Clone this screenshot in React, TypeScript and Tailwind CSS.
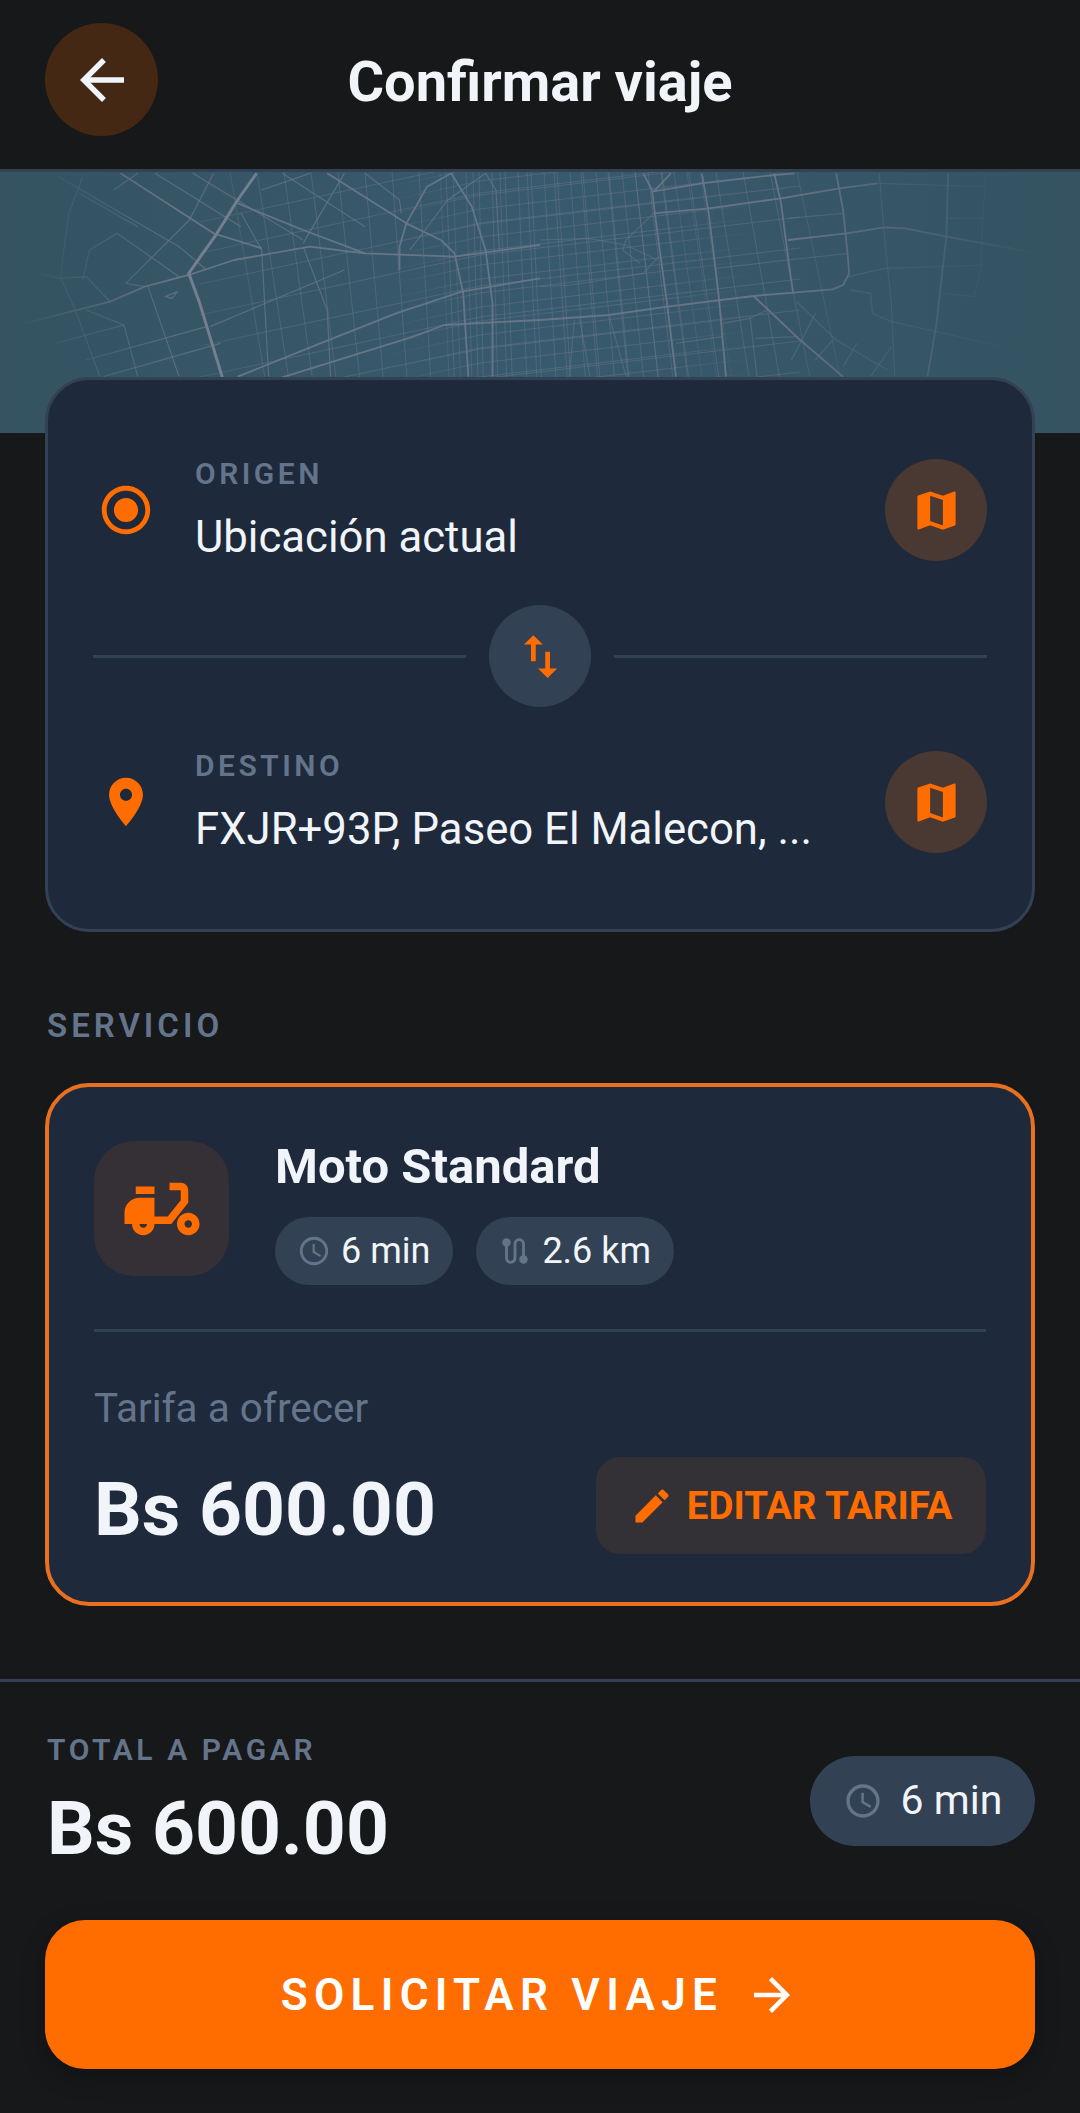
const MOTORWAYS = [
  'M745 10L690 90L630 190L548 310L580 400L645 620L655 700',
];

const LEFT_ROADS = [
  'M690 620L930 520L1150 430L1340 365L1568 325',
  'M810 625L1200 500L1290 465L1568 450',
  'M1310 10L1370 110L1410 240L1430 400L1430 620',
  'M1280 210L1320 250L1345 370L1360 620',
  'M1310 10L1240 50L1180 160L1160 230L1160 300',
  'M70 460L320 395L420 350L548 315L680 270L900 230L1060 250L1320 260L1568 225',
  'M950 10L1180 160L1280 210',
  'M690 100L880 180L1060 250',
  'M350 10L620 190L760 235',
];

const LEFT_MINOR = [
  'M170 20L520 230L600 300',
  'M620 10L550 150L365 340L420 350',
  'M430 350L520 620',
  'M240 20L200 130L175 320L215 410L290 620',
  'M110 310L175 325L250 320L320 395',
  'M230 70L400 170',
  'M330 60L400 10',
  'M240 330L260 240L340 190L520 320',
  'M250 420L360 465L400 620',
  'M160 520L360 465',
  'M250 570L600 470',
  'M300 620L640 520',
  'M480 380L515 365L500 385Z',
  'M610 470L1000 300',
  'M1060 10L1160 90L1165 130',
  'M1410 10L1440 60L1450 240',
  'M1190 240L1300 90L1410 10',
  'M700 130L760 240L780 620',
  'M880 230L950 420L960 620',
  'M450 10L700 170',
  'M560 10L880 210',
  'M820 10L1060 170',
  'M760 60L900 10',
  'M880 220L1000 10',
];

const RIGHT_ROADS = [
  'M300 10L325 60L345 220L370 410L395 620',
  'M470 10L490 130L510 300L520 390L540 620',
  'M680 10L700 100L720 260L735 370',
  'M860 10L880 120L890 220L898 310L880 345L850 358L620 378L370 410L200 435L0 450',
  'M720 210L890 190L1000 172L1060 175L1180 200L1500 260',
  'M1185 10L1180 200L1150 470L1125 620',
  'M620 378L750 505L880 620',
  'M330 65L380 10',
  'M325 65L470 40L680 15L740 10',
  'M330 130L490 115L700 85L870 55L980 40',
];

const RIGHT_MINOR = [
  'M980 40L1290 50',
  'M510 295L720 270L895 250',
  'M0 210L140 205L250 225L340 270',
  'M985 10L1000 200L1020 400L1030 620',
  'M1295 10L1285 150L1280 300L1260 380',
  'M960 370L965 430L1020 455L1150 485L1430 550',
  'M745 395L860 510L1010 600',
  'M800 430L730 570',
  'M850 510L800 570',
  'M920 520L880 590',
  'M1020 530L960 620',
  'M610 440L630 620',
  'M530 460L610 445L660 420',
  'M625 505L750 500',
  'M895 320L1000 295L1300 285',
  'M100 450L85 620',
  'M115 445L145 620',
  'M200 435L250 620',
  'M330 130L250 210L240 240L290 280',
  'M880 130L720 145',
  'M1180 145L1285 145',
  'M1170 370L1260 380',
  'M395 520L530 500',
  'M900 360L960 370',
  'M0 350L90 345L300 310L345 260',
];

const range = (from: number, to: number, step: number) => {
  const out: number[] = [];
  for (let v = from; v <= to; v += step) out.push(v);
  return out;
};

const vertical = (x: number) => {
  const slope = Math.abs(x - 480) * 0.0006 + 0.02;
  return `M${x} 0L${x + slope * 262} 262`;
};

const horizontal = (y: number) => `M200 ${y + 60}L480 ${y}L800 ${y - 38}`;

function CityMap() {
  return (
    <svg
      className="block w-full h-full blur-[0.6px] [mask-image:linear-gradient(to_right,transparent_1%,black_16%,black_72%,transparent_97%)]"
      viewBox="0 0 1080 261"
      preserveAspectRatio="none"
    >
      <defs>
        <linearGradient id="wide" gradientUnits="userSpaceOnUse" x1="60" y1="0" x2="960" y2="0">
          <stop offset="0" stopColor="#6b7889" stopOpacity="0" />
          <stop offset="0.25" stopColor="#6b7889" stopOpacity="0.45" />
          <stop offset="0.8" stopColor="#6b7889" stopOpacity="0.45" />
          <stop offset="1" stopColor="#6b7889" stopOpacity="0" />
        </linearGradient>
        <linearGradient id="dense" gradientUnits="userSpaceOnUse" x1="380" y1="0" x2="760" y2="0">
          <stop offset="0" stopColor="#6b7889" stopOpacity="0" />
          <stop offset="0.25" stopColor="#6b7889" stopOpacity="0.45" />
          <stop offset="0.75" stopColor="#6b7889" stopOpacity="0.45" />
          <stop offset="1" stopColor="#6b7889" stopOpacity="0" />
        </linearGradient>
      </defs>
      <g fill="none" strokeWidth="1">
        <g stroke="url(#wide)">
          {range(230, 800, 27).map((x) => <path key={x} d={vertical(x)} />)}
          {range(-10, 300, 31).map((y) => <path key={y} d={horizontal(y)} />)}
        </g>
        <g stroke="url(#dense)">
          {range(440, 700, 13).map((x) => <path key={x} d={vertical(x)} />)}
          {range(-5, 290, 14).map((y) => <path key={y} d={horizontal(y)} />)}
        </g>
      </g>
      <g transform="translate(0 -2) scale(0.3444 0.3333)" fill="none" strokeLinejoin="round">
        {LEFT_MINOR.map((d) => <path key={d} d={d} stroke="#68788a" strokeOpacity="0.7" strokeWidth="1.2" vectorEffect="non-scaling-stroke" />)}
        {LEFT_ROADS.map((d) => <path key={d} d={d} stroke="#6b7889" strokeOpacity="0.9" strokeWidth="1.8" vectorEffect="non-scaling-stroke" />)}
        {MOTORWAYS.map((d) => <path key={d} d={d} stroke="#737f8e" strokeWidth="3" vectorEffect="non-scaling-stroke" />)}
      </g>
      <g transform="translate(540 -2) scale(0.3444 0.3333)" fill="none" strokeLinejoin="round">
        {RIGHT_MINOR.map((d) => <path key={d} d={d} stroke="#68788a" strokeOpacity="0.5" strokeWidth="1.2" vectorEffect="non-scaling-stroke" />)}
        {RIGHT_ROADS.map((d) => <path key={d} d={d} stroke="#6b7889" strokeOpacity="0.9" strokeWidth="1.8" vectorEffect="non-scaling-stroke" />)}
      </g>
    </svg>
  );
}

function Icon({ d, className }: { d: string; className: string }) {
  return (
    <svg viewBox="0 0 24 24" fill="currentColor" className={className}>
      <path d={d} />
    </svg>
  );
}

const ICONS = {
  back: 'M20 11H7.83l5.59-5.59L12 4l-8 8 8 8 1.41-1.41L7.83 13H20v-2z',
  forward: 'M12 4l-1.41 1.41L16.17 11H4v2h12.17l-5.58 5.59L12 20l8-8z',
  radio: 'M12 7c-2.76 0-5 2.24-5 5s2.24 5 5 5 5-2.24 5-5-2.24-5-5-5zm0-5C6.48 2 2 6.48 2 12s4.48 10 10 10 10-4.48 10-10S17.52 2 12 2zm0 18c-4.42 0-8-3.58-8-8s3.58-8 8-8 8 3.58 8 8-3.58 8-8 8z',
  pin: 'M12 2C8.13 2 5 5.13 5 9c0 5.25 7 13 7 13s7-7.75 7-13c0-3.87-3.13-7-7-7zm0 9.5c-1.38 0-2.5-1.12-2.5-2.5s1.12-2.5 2.5-2.5 2.5 1.12 2.5 2.5-1.12 2.5-2.5 2.5z',
  map: 'M20.5 3l-.16.03L15 5.1 9 3 3.36 4.9c-.21.07-.36.25-.36.48V20.5c0 .28.22.5.5.5l.16-.03L9 18.9l6 2.1 5.64-1.9c.21-.07.36-.25.36-.48V3.5c0-.28-.22-.5-.5-.5zM15 19l-6-2.11V5l6 2.11V19z',
  swap: 'M16 17.01V10h-2v7.01h-3L15 21l4-3.99h-3zM9 3L5 6.99h3V14h2V6.99h3L9 3z',
  moped: 'M19 7c0-1.1-.9-2-2-2h-3v2h3v2.65L13.52 14H10V9H6c-2.21 0-4 1.79-4 4v3h2c0 1.66 1.34 3 3 3s3-1.34 3-3h4.48L19 10.35V7zM7 17c-.55 0-1-.45-1-1h2c0 .55-.45 1-1 1zM5 6h5v2H5zM19 13c-1.66 0-3 1.34-3 3s1.34 3 3 3 3-1.34 3-3-1.34-3-3-3zm0 4c-.55 0-1-.45-1-1s.45-1 1-1 1 .45 1 1-.45 1-1 1z',
  clock: 'M11.99 2C6.47 2 2 6.48 2 12s4.47 10 9.99 10C17.52 22 22 17.52 22 12S17.52 2 11.99 2zM12 20c-4.42 0-8-3.58-8-8s3.58-8 8-8 8 3.58 8 8-3.58 8-8 8zM12.5 7H11v6l5.25 3.15.75-1.23-4.5-2.67z',
  route: 'M19 15.18V7c0-2.21-1.79-4-4-4s-4 1.79-4 4v10c0 1.1-.9 2-2 2s-2-.9-2-2V8.82C8.16 8.4 9 7.3 9 6c0-1.66-1.34-3-3-3S3 4.34 3 6c0 1.3.84 2.4 2 2.82V17c0 2.21 1.79 4 4 4s4-1.79 4-4V7c0-1.1.9-2 2-2s2 .9 2 2v8.18c-1.16.41-2 1.51-2 2.82 0 1.66 1.34 3 3 3s3-1.34 3-3c0-1.3-.84-2.4-2-2.82z',
  edit: 'M3 17.25V21h3.75L17.81 9.94l-3.75-3.75L3 17.25zM20.71 7.04c.39-.39.39-1.02 0-1.41l-2.34-2.34c-.39-.39-1.02-.39-1.41 0l-1.83 1.83 3.75 3.75 1.83-1.83z',
};

function PlaceRow({ icon, label, value }: { icon: string; label: string; value: string }) {
  return (
    <div className="flex items-center h-[102px]">
      <div className="w-[102px] flex-shrink-0 pl-[4px]">
        <Icon d={icon} className="w-[58px] h-[58px] text-[#ff6d00]" />
      </div>
      <div className="flex-1 min-w-0">
        <div className="text-[30px] leading-[32px] font-semibold tracking-[3.5px] text-[#64748b]">{label}</div>
        <div className="mt-[21px] text-[43.7px] leading-[52px] text-[#f1f5f9] truncate">{value}</div>
      </div>
      <div className="w-[102px] h-[102px] flex-shrink-0 rounded-full bg-[#4a3833] flex items-center justify-center">
        <Icon d={ICONS.map} className="w-[51px] h-[51px] text-[#ff6d00]" />
      </div>
    </div>
  );
}

function InfoPill({ icon, text }: { icon: string; text: string }) {
  return (
    <div className="h-[68px] pl-[22px] pr-[23px] rounded-full bg-[#334155] flex items-center gap-[10px]">
      <Icon d={icon} className="w-[34px] h-[34px] text-[#64748b]" />
      <span className="text-[36px] text-[#f1f5f9]">{text}</span>
    </div>
  );
}

export default function App() {
  return (
    <div className="relative h-[2113px] bg-[#17181a] overflow-hidden [font-family:Roboto,sans-serif]">
      <header className="h-[172px] px-[45px] pt-[23px] border-b-[3px] border-[#334155] relative">
        <button className="w-[113px] h-[113px] rounded-full bg-[#452813] flex items-center justify-center">
          <Icon d={ICONS.back} className="w-[66px] h-[66px] text-[#f1f5f9]" />
        </button>
        <h1 className="absolute left-0 right-0 top-[52px] text-center text-[56px] leading-[60px] font-bold text-[#f1f5f9]">
          Confirmar viaje
        </h1>
      </header>

      <div className="h-[261px] bg-linear-to-r from-[#355361] via-[#385a6e] to-[#355361]">
        <CityMap />
      </div>

      <section className="relative mx-[45px] -mt-[56px] h-[555px] rounded-[44px] bg-[#1e293b] border-[3px] border-[#334155] px-[45px] pt-[79px] pb-[76px] flex flex-col gap-[44px]">
        <PlaceRow icon={ICONS.radio} label="ORIGEN" value="Ubicación actual" />
        <div className="flex items-center h-[102px]">
          <div className="flex-1 h-[3px] bg-[#334155]" />
          <div className="w-[102px] h-[102px] mx-[23px] rounded-full bg-[#334155] flex items-center justify-center">
            <Icon d={ICONS.swap} className="w-[57px] h-[57px] text-[#ff6d00]" />
          </div>
          <div className="flex-1 h-[3px] bg-[#334155]" />
        </div>
        <PlaceRow icon={ICONS.pin} label="DESTINO" value="FXJR+93P, Paseo El Malecon, ..." />
      </section>

      <h2 className="mx-[47px] mt-[76px] text-[33px] leading-[36px] font-semibold tracking-[4px] text-[#64748b]">SERVICIO</h2>

      <section className="mx-[45px] mt-[39px] h-[523px] rounded-[44px] bg-[#1e293b] border-[4px] border-[#e8701f] px-[45px] pt-[54px]">
        <div className="flex">
          <div className="w-[135px] h-[135px] rounded-[40px] bg-[#352f36] flex items-center justify-center">
            <Icon d={ICONS.moped} className="w-[90px] h-[90px] text-[#ff6d00]" />
          </div>
          <div className="ml-[46px] -mt-[4px]">
            <div className="text-[49px] leading-[60px] font-bold text-[#f1f5f9]">Moto Standard</div>
            <div className="mt-[20px] flex gap-[23px]">
              <InfoPill icon={ICONS.clock} text="6 min" />
              <InfoPill icon={ICONS.route} text="2.6 km" />
            </div>
          </div>
        </div>
        <div className="mt-[44px] h-[3px] bg-[#334155]" />
        <div className="mt-[53px] text-[40.5px] leading-[46px] text-[#64748b]">Tarifa a ofrecer</div>
        <div className="mt-[26px] flex items-center justify-between">
          <div className="text-[75px] leading-[84px] font-bold text-[#f1f5f9] relative top-[3px]">Bs 600.00</div>
          <button className="w-[390px] h-[97px] rounded-[24px] bg-[#333136] flex items-center justify-center gap-[13px] text-[38.5px] font-bold text-[#ff6d00]">
            <Icon d={ICONS.edit} className="w-[44px] h-[44px]" />
            EDITAR TARIFA
          </button>
        </div>
      </section>

      <footer className="absolute left-0 right-0 bottom-0 h-[434px] border-t-[3px] border-[#334155] px-[45px]">
        <div className="flex justify-between">
          <div className="pl-[2px]">
            <div className="mt-[52px] text-[30px] leading-[32px] font-semibold tracking-[3.6px] text-[#64748b]">TOTAL A PAGAR</div>
            <div className="mt-[20px] text-[75px] leading-[84px] font-bold text-[#f1f5f9]">Bs 600.00</div>
          </div>
          <div className="mt-[74px] h-[90px] w-[225px] rounded-full bg-[#334155] flex items-center justify-center gap-[18px]">
            <Icon d={ICONS.clock} className="w-[40px] h-[40px] text-[#64748b]" />
            <span className="text-[41px] text-[#f1f5f9]">6 min</span>
          </div>
        </div>
        <button className="absolute left-[45px] right-[45px] top-[238px] h-[149px] rounded-[40px] bg-[#ff6d00] shadow-[0_8px_24px_rgba(0,0,0,0.25)] flex items-center justify-center gap-[22px] text-[44px] font-semibold tracking-[6.3px] text-white">
          SOLICITAR VIAJE
          <Icon d={ICONS.forward} className="w-[54px] h-[54px]" />
        </button>
      </footer>
    </div>
  );
}
